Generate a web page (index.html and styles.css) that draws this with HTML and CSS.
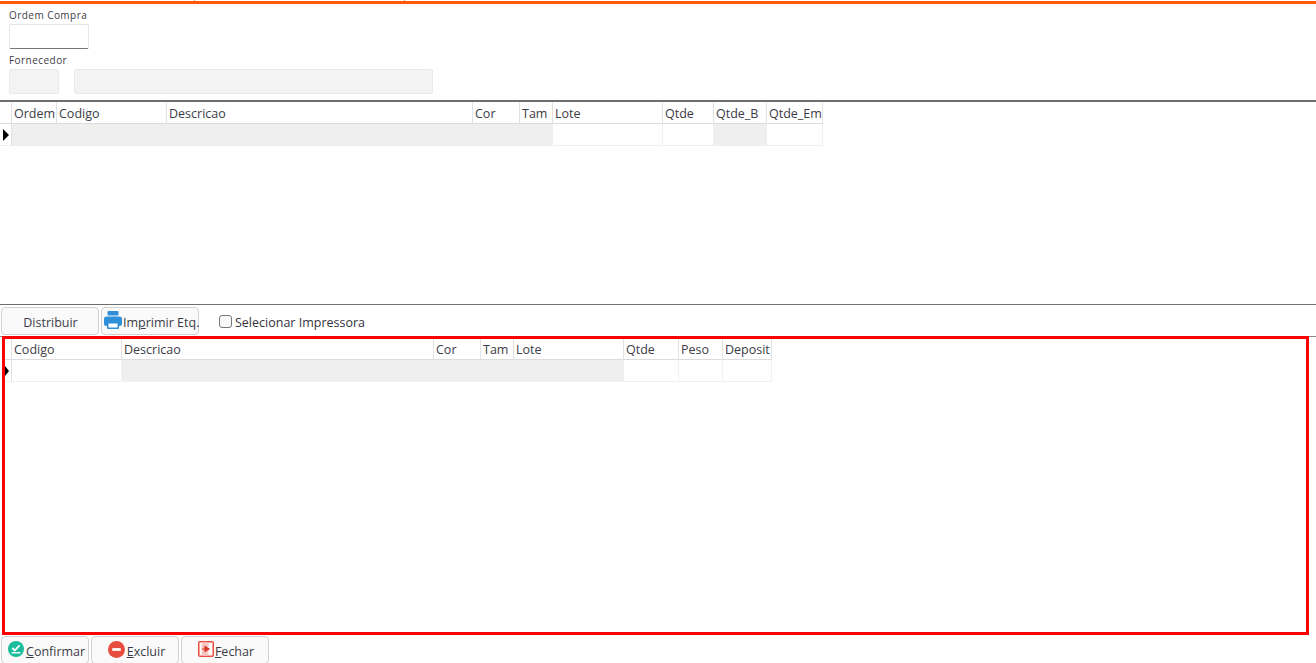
FILE: index.html
```html
<!DOCTYPE html>
<html lang="pt">
<head>
<meta charset="utf-8">
<title>Ordem Compra</title>
<link rel="stylesheet" href="styles.css">
</head>
<body>
<div class="app">
  <div class="topbar"><i class="tick tick-a"></i><i class="tick tick-b"></i></div>
  <section class="form">
    <label class="label label-first">Ordem Compra</label>
    <div class="input input-order"></div>
    <label class="label label-second">Fornecedor</label>
    <div class="supplier">
      <div class="input input-off input-code"></div>
      <div class="input input-off input-name"></div>
    </div>
  </section>

  <section class="upper">
    <div class="grid grid-a">
      <div class="hd ind"></div>
      <div class="hd">Ordem</div>
      <div class="hd">Codigo</div>
      <div class="hd">Descricao</div>
      <div class="hd">Cor</div>
      <div class="hd">Tam</div>
      <div class="hd">Lote</div>
      <div class="hd">Qtde</div>
      <div class="hd">Qtde_B</div>
      <div class="hd">Qtde_Em</div>
      <div class="cell ind"><i class="arrow"></i></div>
      <div class="cell off"></div>
      <div class="cell off"></div>
      <div class="cell off"></div>
      <div class="cell off"></div>
      <div class="cell off"></div>
      <div class="cell"></div>
      <div class="cell"></div>
      <div class="cell off"></div>
      <div class="cell"></div>
    </div>
  </section>

  <div class="toolbar">
    <button class="btn btn-dist" type="button"><span>Distribuir</span></button>
    <button class="btn btn-print" type="button">
      <svg class="ico-print" viewBox="0 0 18 18" aria-hidden="true">
        <rect x="3.500" y="0" width="11" height="4.500" rx="1" fill="#2f8fd8"/>
        <rect x="0" y="5.500" width="18" height="9.500" rx="2.500" fill="#2f8fd8"/>
        <rect x="3" y="11" width="12" height="7" rx="1" fill="#2f8fd8"/>
        <rect x="4.500" y="12.500" width="9" height="4" fill="#fff"/>
      </svg><span>Im<u>p</u>rimir Etq.</span>
    </button>
    <label class="check"><i class="box"></i>Selecionar Impressora</label>
  </div>

  <section class="lower">
    <div class="redbox">
      <div class="grid grid-b">
        <div class="hd ind"></div>
        <div class="hd">Codigo</div>
        <div class="hd">Descricao</div>
        <div class="hd">Cor</div>
        <div class="hd">Tam</div>
        <div class="hd">Lote</div>
        <div class="hd">Qtde</div>
        <div class="hd">Peso</div>
        <div class="hd">Deposit</div>
        <div class="cell ind"><i class="arrow arrow-small"></i></div>
        <div class="cell"></div>
        <div class="cell off"></div>
        <div class="cell off"></div>
        <div class="cell off"></div>
        <div class="cell off"></div>
        <div class="cell"></div>
        <div class="cell"></div>
        <div class="cell"></div>
      </div>
    </div>
  </section>

  <div class="actions">
    <button class="btn btn-confirm" type="button">
      <svg class="ico" viewBox="0 0 16 16" aria-hidden="true">
        <circle cx="8" cy="8" r="8" fill="#1abc9c"/>
        <path d="M4.300 7l2.500 2.400 4.800-5" fill="none" stroke="#fff" stroke-width="1.800"/>
        <path d="M3.500 11.800h9" stroke="#fff" stroke-width="1.400"/>
      </svg><span><u>C</u>onfirmar</span>
    </button>
    <button class="btn btn-delete" type="button">
      <svg class="ico" viewBox="0 0 16 16" aria-hidden="true">
        <circle cx="8" cy="8" r="8" fill="#e74c3c"/>
        <path d="M4 6.700h8v2.600H4z" fill="#fff"/>
      </svg><span><u>E</u>xcluir</span>
    </button>
    <button class="btn btn-close" type="button">
      <svg class="ico" viewBox="0 0 16 16" aria-hidden="true">
        <rect width="16" height="16" rx="2" fill="#e74c3c"/>
        <path d="M1.500 1.500h13v13h-13z" fill="#fff"/>
        <path d="M3.500 1.500h7v13h-7z" fill="#f7c9c4"/>
        <path d="M4 8h3V5.500L11 8l-4 2.500V8z" stroke="#d9362b" stroke-width="1.200" fill="#d9362b"/>
      </svg><span><u>F</u>echar</span>
    </button>
  </div>
</div>
</body>
</html>
```
FILE: styles.css
```css
* { box-sizing: border-box; }
html, body { margin: 0; padding: 0; background: #fff; }
body {
  font-family: "Open Sans", "Noto Sans", sans-serif;
  font-size: 12px;
  color: #3c3c46;
  overflow: hidden;
}
.app { width: 1316px; height: 663px; display: flex; flex-direction: column; overflow: hidden; }

.topbar { height: 4px; border-top: 1px solid #fff; background: #ff5a0a; display: flex; position: relative; flex: none; }
.tick { position: absolute; top: -1px; width: 1px; height: 1px; background: #c9a080; }
.tick-a { left: 194px; }
.tick-b { left: 404px; }

.form { height: 96px; padding: 0 0 0 9px; flex: none; }
.label { display: block; font-size: 10px; line-height: 14px; letter-spacing: .45px; }
.label-first { padding-top: 4px; height: 20px; }
.label-second { margin-top: 4px; height: 16px; }
.input { height: 25px; border: 1px solid #e6e6e6; border-radius: 2px; background: #fff; }
.input-order { width: 80px; border-bottom: 1px solid #777; }
.supplier { display: flex; gap: 15px; }
.input-off { background: #f3f3f3; border-color: #e9e9e9; }
.input-code { width: 50px; }
.input-name { width: 359px; }

.upper { height: 205px; border-top: 2px solid #6e6e6e; border-bottom: 1px solid #6e6e6e; flex: none; }

.grid { display: grid; grid-template-rows: 22px 22px; font-size: 12.500px; }
.grid-a { grid-template-columns: 12px 45px 110px 306px 47px 33px 110px 51px 53px 56px; width: 823px; }
.grid-b { grid-template-columns: 7px 110px 312px 47px 33px 110px 55px 44px 49px; width: 767px; height: 43px; grid-template-rows: 21px 22px; }
.hd {
  line-height: 21px;
  padding-left: 2px;
  border-right: 1px solid #e2e2e2;
  border-bottom: 1px solid #dcdcdc;
  white-space: nowrap;
  overflow: hidden;
}
.grid-a .hd { line-height: 23px; }
.cell { border-right: 1px solid #f0f0f0; border-bottom: 1px solid #f0f0f0; background: #fff; }
.cell.off { background: #efefef; border-color: #efefef; }
.cell.ind { display: flex; align-items: center; padding-left: 3px; border-right-color: #e2e2e2; }
.grid-b .cell.ind { padding-left: 0; }
.arrow { width: 0; height: 0; border-left: 6px solid #000; border-top: 6px solid transparent; border-bottom: 6px solid transparent; }
.arrow-small { border-left-width: 4px; border-top-width: 5px; border-bottom-width: 5px; }

.toolbar { height: 31px; padding: 2px 0 0 1px; display: flex; gap: 2px; align-items: flex-start; flex: none; }
.btn {
  height: 28px;
  border: 1px solid #d2d2d2;
  border-radius: 4px;
  background: #fafafa;
  font: inherit;
  font-size: 12.500px;
  color: #3c3c46;
  display: flex;
  align-items: center;
  justify-content: center;
  padding: 0;
}
.btn-dist { width: 98px; padding-left: 1px; }
.btn-print { width: 98px; justify-content: flex-start; padding-left: 2px; gap: 1px; }
.ico-print { width: 18px; height: 18px; flex: none; margin-bottom: 2px; }
.check { display: flex; align-items: center; height: 30px; margin-left: 18px; font-size: 12.500px; color: #33333c; }
.box { width: 13px; height: 13px; border: 1px solid #777; border-radius: 3px; background: #f8f8f8; margin-right: 3px; margin-bottom: 1px; }

.lower { height: 299px; border-top: 1px solid #8a8a8a; flex: none; }
.redbox { width: 1307px; height: 299px; margin: -1px 0 0 2px; border: 3px solid #ff0000; background: #fff; }

.actions { padding: 1px 0 0 1px; display: flex; gap: 2px; flex: none; }
.btn-confirm { width: 88px; gap: 2px; justify-content: flex-start; padding-left: 6px; }
.btn-delete { width: 88px; padding-left: 3px; gap: 2px; }
.btn-close { width: 88px; padding-left: 2px; gap: 1px; }
.ico { width: 16px; height: 16px; flex: none; margin-bottom: 2px; }
.btn-delete .ico { width: 17px; height: 17px; }
.btn span { position: relative; top: 1px; white-space: nowrap; }
```
